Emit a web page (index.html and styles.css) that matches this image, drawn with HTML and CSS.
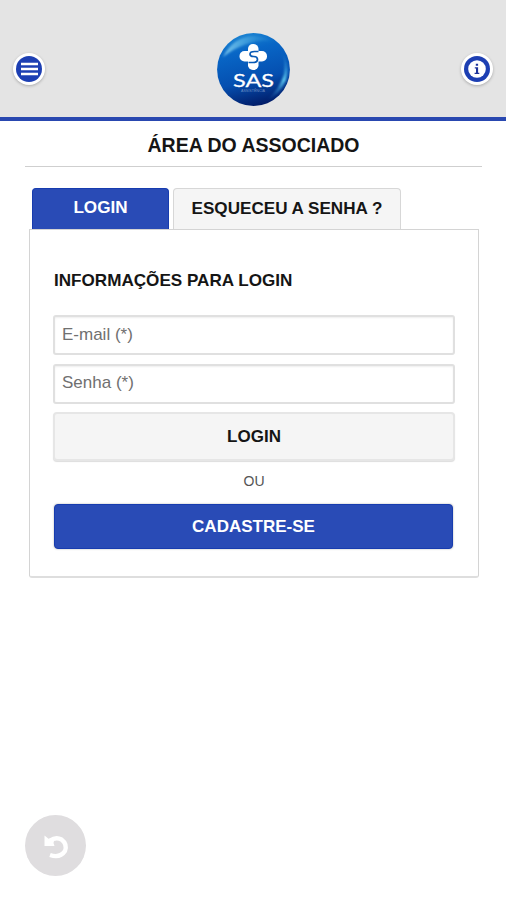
FILE: index.html
```html
<!DOCTYPE html>
<html lang="pt-BR">
<head>
<meta charset="utf-8">
<title>SAS</title>
<link rel="stylesheet" href="styles.css">
</head>
<body>
<header class="topbar">
  <button class="round" aria-label="Menu">
    <svg width="26" height="26" viewBox="0 0 26 26"><circle cx="13" cy="13" r="13" fill="#1d3fb3"/><path d="M5 8h17M5 13h17M5 18h17" stroke="#fff" stroke-width="2.6"/></svg>
  </button>
  <svg class="logo" width="76" height="76" viewBox="0 0 76 76">
    <defs>
      <linearGradient id="ball" x1=".3" y1="0" x2=".55" y2="1"><stop offset="0" stop-color="#1b84d2"/><stop offset=".25" stop-color="#0866c6"/><stop offset=".65" stop-color="#054fb0"/><stop offset="1" stop-color="#011c68"/></linearGradient>
      <linearGradient id="shine" x1="0" y1="0" x2="1" y2="0"><stop offset="0" stop-color="#8ed4f3" stop-opacity=".85"/><stop offset="1" stop-color="#4bbbe8" stop-opacity="0"/></linearGradient>
      <linearGradient id="rim" x1="0" y1="0" x2="0" y2="1"><stop offset="0" stop-color="#157bce" stop-opacity="0"/><stop offset=".6" stop-color="#5bc5ee"/><stop offset="1" stop-color="#1a6cc4" stop-opacity="0"/></linearGradient>
      <filter id="soft"><feGaussianBlur stdDeviation="1"/></filter>
    </defs>
    <circle cx="38.5" cy="38.5" r="36.4" fill="url(#ball)"/>
    <path d="M8 26Q18 6 38 5Q52 5 58 11Q42 8 29 14Q18 18 8 26Z" fill="url(#shine)" filter="url(#soft)"/>
    <path d="M65 18Q76 32 71 49Q65 64 51 70Q65 58 69 43Q71 28 65 18Z" fill="url(#rim)" filter="url(#soft)"/>
    <g fill="#fff"><rect x="24.500" y="20" width="27.500" height="10.500" rx="5"/><rect x="33" y="13" width="10.500" height="26" rx="4.800"/></g>
    <path d="M43.500 20.500h-4q-4.500 0-4.500 2.500t3.500 2.500q4 0 4 3t-4.500 3h-4.500" fill="none" stroke="#0759b5" stroke-width="1.700"/>
    <text class="logo-name" x="18" y="56" textLength="41" lengthAdjust="spacingAndGlyphs">SAS</text>
    <text class="logo-sub" x="26" y="60.7" textLength="24" lengthAdjust="spacingAndGlyphs">ASSISTÊNCIA</text>
  </svg>
  <button class="round" aria-label="Informações">
    <svg width="26" height="26" viewBox="0 0 26 26"><circle cx="13" cy="13" r="13" fill="#1d3fb3"/><circle cx="13" cy="13" r="8.8" fill="#fff"/><path d="M10.8 11.200h3.300v5.600h1.200v1.200h-4.700v-1.200h1.400v-4.400h-1.200zM11.800 7.800h2.300v2h-2.300z" fill="#1d329b"/></svg>
  </button>
</header>
<main>
  <h1>ÁREA DO ASSOCIADO</h1>
  <nav class="tabs">
    <a class="tab active">LOGIN</a>
    <a class="tab">ESQUECEU A SENHA ?</a>
  </nav>
  <form class="panel">
    <h2>INFORMAÇÕES PARA LOGIN</h2>
    <input class="email" type="text" placeholder="E-mail (*)">
    <input type="password" placeholder="Senha (*)">
    <button type="button" class="login">LOGIN</button>
    <p>OU</p>
    <button type="button" class="register">CADASTRE-SE</button>
  </form>
</main>
<button class="back" aria-label="Voltar">
  <svg width="61" height="61" viewBox="0 0 61 61"><path d="M25 25.500Q31 21.500 36.500 24.500Q42.500 29 40 36Q35 43.500 25 40" fill="none" stroke="#fff" stroke-width="4.300"/><path d="M19.500 20.500l4 3.200 6 .3-1 4 1 3h-10z" fill="#fff"/></svg>
</button>
</body>
</html>
```
FILE: styles.css
```css
* { box-sizing: border-box; }
body {
  margin: 0;
  height: 900px;
  background: #fff;
  color: #151515;
  font-family: "Liberation Sans", Arial, sans-serif;
  overflow: hidden;
}
button { border: 0; padding: 0; font-family: inherit; }
.topbar {
  display: flex;
  justify-content: space-between;
  height: 121px;
  padding: 31px 13px 0;
  background: #e4e4e4;
  border-bottom: 4px solid #2948b0;
}
.round {
  display: grid;
  place-items: center;
  width: 32px;
  height: 32px;
  margin-top: 22px;
  border-radius: 50%;
  background: #fff;
  box-shadow: 0 1px 3px rgba(0,0,0,.25);
}
.round svg, .logo, .back svg { display: block; }
.logo-name { font: 18px Lato, sans-serif; fill: #fff; stroke: #fff; stroke-width: .3px; }
.logo-sub { font: 3.5px "Liberation Sans", sans-serif; fill: #6e8fc4; }
h1 {
  margin: 0 24px 0 25px;
  height: 46px;
  border-bottom: 1px solid #cfcfcf;
  font-size: 19.5px;
  line-height: 48px;
  text-align: center;
}
.tabs { display: flex; gap: 4px; margin: 21px 0 0 32px; }
.tab {
  height: 41px;
  border: 1px solid #d7d7d7;
  border-bottom: 0;
  border-radius: 4px 4px 0 0;
  background: #f5f5f5;
  width: 228px;
  font-size: 17.1px;
  font-weight: bold;
  line-height: 40px;
  text-align: center;
}
.active {
  width: 137px;
  border-color: #173caf;
  background: #294bb6;
  color: #fff;
  line-height: 37px;
}
.panel {
  display: flex;
  flex-direction: column;
  width: 450px;
  height: 349px;
  margin-left: 29px;
  padding: 41px 24px 0;
  border: 1px solid #d4d4d4;
  border-bottom: 2px solid #dedede;
  border-radius: 0 0 3px 3px;
}
h2 { margin: 0 0 24px; font-size: 17.1px; line-height: 20px; }
input {
  width: 402px;
  height: 40px;
  margin: 0 0 9px -1px;
  padding: 0 7px 2px;
  border: 2px solid #e0e0e0;
  border-radius: 3px;
  box-shadow: inset 0 1px 2px #eee;
  font: 17px "Liberation Sans", Arial, sans-serif;
}
.email { padding-bottom: 0; }
input::placeholder { color: #707070; opacity: 1; }
.login, .register {
  width: 402px;
  margin-left: -1px;
  border-radius: 4px;
  font-size: 17px;
  font-weight: bold;
}
.login {
  height: 49px;
  margin-top: -1px;
  border: 2px solid #e6e6e6;
  background: #f5f5f5;
  color: #151515;
  box-shadow: 0 1px 1px #ddd;
}
p { margin: 9px 0 12px; color: #555; font-size: 14px; line-height: 22px; text-align: center; }
.register {
  width: 399px;
  margin-left: 0;
  height: 45px;
  border: 1px solid #173caf;
  background: #294bb6;
  color: #fff;
  box-shadow: 0 0 2px #aaa;
}
.back {
  position: fixed;
  left: 25px;
  bottom: 24px;
  width: 61px;
  height: 61px;
  border-radius: 50%;
  background: #dfdddf;
}
```
